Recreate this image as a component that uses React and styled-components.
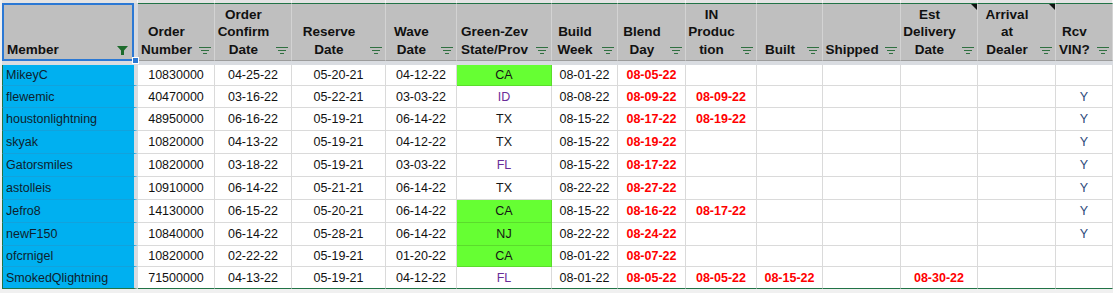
import React from 'react'
import styled, { createGlobalStyle } from 'styled-components'

const GlobalStyle = createGlobalStyle`
  html, body {
    margin: 0;
    padding: 0;
    background: #f0f0f0;
  }
  body {
    font-family: "Liberation Sans", Arial, sans-serif;
  }
`

// member col (incl. 4px freeze bar) + the rest of the sheet
const COLS = '136px 77px 77px 94px 71px 95px 66px 68px 71px 66px 78px 77px 78px 57px'

const Sheet = styled.div`
  width: 1113px;
  height: 293px;
  overflow: hidden;
  padding-left: 2px;
  box-sizing: border-box;
  background: #f0f0f0;
`

const TopCap = styled.div`
  display: grid;
  grid-template-columns: ${COLS};
  height: 3px;
`

const CapCell = styled.div`
  background: #e4e4e4;
  border-right: 1px solid #f7f7f7;
`

const HeaderRow = styled.div`
  display: grid;
  grid-template-columns: ${COLS};
  height: 58px;
`

const MemberHead = styled.div`
  position: relative;
  display: flex;
  background: #bfbfbf;
  border-right: 4px solid #d6d9de;
`

const Selection = styled.div`
  flex: 1;
  display: flex;
  align-items: flex-end;
  justify-content: space-between;
  border: 2px solid #2b78d4;
  padding: 0 4px 1px 3px;
  font-weight: bold;
  font-size: 13.5px;
  line-height: 17.5px;
  color: #111;
`

const Handle = styled.div`
  position: absolute;
  right: -5px;
  bottom: -3px;
  width: 5px;
  height: 5px;
  background: #2b78d4;
  border: 1px solid #fff;
  z-index: 2;
`

const HeadCell = styled.div`
  position: relative;
  display: flex;
  align-items: flex-end;
  background: #bfbfbf;
  border-top: 1px solid #217346;
  border-right: 1px solid #d3d3d3;
  border-bottom: 1px solid #9c9c9c;
  padding-bottom: 2px;
  box-sizing: border-box;

  ${p => p.$comment && `
    &::after {
      content: '';
      position: absolute;
      top: 0;
      right: 0;
      border-left: 6px solid transparent;
      border-top: 6px solid #111;
    }
  `}
`

const HeadText = styled.div`
  flex: 1;
  text-align: center;
  font-weight: bold;
  font-size: 13.5px;
  line-height: 17.5px;
  color: #111;
  white-space: nowrap;
`

const FilterBtn = styled.div`
  flex: none;
  width: 19px;
  display: flex;
  justify-content: flex-end;
  padding-right: 3px;
  margin-bottom: 4px;
  box-sizing: border-box;
`

const FunnelBtn = styled.div`
  display: flex;
  margin-bottom: 3px;
`

const FreezeBar = styled.div`
  height: 4px;
  background: #d9dce1;
`

const Row = styled.div`
  display: grid;
  grid-template-columns: ${COLS};
  height: ${p => p.$h}px;
`

const MemberCell = styled.div`
  display: flex;
  align-items: center;
  background: #00b0f0;
  border-left: 1px solid #217346;
  border-right: 4px solid #d9dce1;
  border-bottom: 1px solid ${p => (p.$last ? '#217346' : '#12a2dc')};
  padding-left: 3px;
  font-size: 12.5px;
  color: #0e1f2e;
  white-space: nowrap;
  overflow: hidden;
`

const Cell = styled.div`
  display: flex;
  align-items: center;
  justify-content: center;
  background: ${p => p.$bg || '#fff'};
  border-right: 1px solid ${p => (p.$bg ? '#5bdc2c' : '#dadada')};
  border-bottom: 1px solid ${p => (p.$last ? '#217346' : p.$bg ? '#5bdc2c' : '#dadada')};
  font-size: 12.5px;
  font-weight: ${p => (p.$bold ? 'bold' : 'normal')};
  color: ${p => p.$color || '#111'};
  white-space: nowrap;
  overflow: hidden;
`

const FilterIcon = () => (
  <svg width="12" height="7" viewBox="0 0 12 7">
    <g stroke="#2f7040" strokeWidth="1">
      <line x1="0" y1="0.5" x2="12" y2="0.5" />
      <line x1="2" y1="3.5" x2="10" y2="3.5" />
      <line x1="4" y1="6.5" x2="8" y2="6.5" />
    </g>
  </svg>
)

const FunnelIcon = () => (
  <svg width="11" height="9" viewBox="0 0 11 9">
    <path d="M0 0 H11 L7 4.5 V9 H4 V4.5 Z" fill="#1d6b2c" />
  </svg>
)

const headers = [
  { lines: ['Order', 'Number'] },
  { lines: ['Order', 'Confirm', 'Date'] },
  { lines: ['Reserve', 'Date'] },
  { lines: ['Wave', 'Date'] },
  { lines: ['Green-Zev', 'State/Prov'] },
  { lines: ['Build', 'Week'] },
  { lines: ['Blend', 'Day'] },
  { lines: ['IN', 'Produc', 'tion'] },
  { lines: ['Built'] },
  { lines: ['Shipped'] },
  { lines: ['Est', 'Delivery', 'Date'], comment: true },
  { lines: ['Arrival', 'at', 'Dealer'], comment: true },
  { lines: ['Rcv', 'VIN?'] },
]

const GREEN = '#66ff33'
const PURPLE = '#6a2c98'
const RED = '#ff0000'

const rows = [
  { h: 21, member: 'MikeyC', num: '10830000', confirm: '04-25-22', reserve: '05-20-21', wave: '04-12-22', state: 'CA', green: true, build: '08-01-22', blend: '08-05-22' },
  { h: 22, member: 'flewemic', num: '40470000', confirm: '03-16-22', reserve: '05-22-21', wave: '03-03-22', state: 'ID', stateColor: PURPLE, build: '08-08-22', blend: '08-09-22', prod: '08-09-22', vin: 'Y' },
  { h: 23, member: 'houstonlightning', num: '48950000', confirm: '06-16-22', reserve: '05-19-21', wave: '06-14-22', state: 'TX', build: '08-15-22', blend: '08-17-22', prod: '08-19-22', vin: 'Y' },
  { h: 23, member: 'skyak', num: '10820000', confirm: '04-13-22', reserve: '05-19-21', wave: '04-12-22', state: 'TX', build: '08-15-22', blend: '08-19-22', vin: 'Y' },
  { h: 23, member: 'Gatorsmiles', num: '10820000', confirm: '03-18-22', reserve: '05-19-21', wave: '03-03-22', state: 'FL', stateColor: PURPLE, build: '08-15-22', blend: '08-17-22', vin: 'Y' },
  { h: 23, member: 'astolleis', num: '10910000', confirm: '06-14-22', reserve: '05-21-21', wave: '06-14-22', state: 'TX', build: '08-22-22', blend: '08-27-22', vin: 'Y' },
  { h: 23, member: 'Jefro8', num: '14130000', confirm: '06-15-22', reserve: '05-20-21', wave: '06-14-22', state: 'CA', green: true, build: '08-15-22', blend: '08-16-22', prod: '08-17-22', vin: 'Y' },
  { h: 23, member: 'newF150', num: '10840000', confirm: '06-14-22', reserve: '05-28-21', wave: '06-14-22', state: 'NJ', green: true, build: '08-22-22', blend: '08-24-22', vin: 'Y' },
  { h: 21, member: 'ofcrnigel', num: '10820000', confirm: '02-22-22', reserve: '05-19-21', wave: '01-20-22', state: 'CA', green: true, build: '08-01-22', blend: '08-07-22' },
  { h: 22, member: 'SmokedQlightning', num: '71500000', confirm: '04-13-22', reserve: '05-19-21', wave: '04-12-22', state: 'FL', stateColor: PURPLE, build: '08-01-22', blend: '08-05-22', prod: '08-05-22', built: '08-15-22', est: '08-30-22' },
]

const App = () => (
  <>
    <GlobalStyle />
    <Sheet>
      <TopCap>
        {Array.from({ length: 14 }).map((_, i) => <CapCell key={i} />)}
      </TopCap>

      <HeaderRow>
        <MemberHead>
          <Selection>
            <span>Member</span>
            <FunnelBtn><FunnelIcon /></FunnelBtn>
          </Selection>
          <Handle />
        </MemberHead>
        {headers.map((h, i) => (
          <HeadCell key={i} $comment={h.comment}>
            <HeadText>
              {h.lines.map((l, j) => (
                <React.Fragment key={j}>
                  {j > 0 && <br />}
                  {l}
                </React.Fragment>
              ))}
            </HeadText>
            <FilterBtn><FilterIcon /></FilterBtn>
          </HeadCell>
        ))}
      </HeaderRow>

      <FreezeBar />

      {rows.map((r, i) => {
        const last = i === rows.length - 1
        return (
          <Row key={r.member} $h={r.h}>
            <MemberCell $last={last}>{r.member}</MemberCell>
            <Cell $last={last}>{r.num}</Cell>
            <Cell $last={last}>{r.confirm}</Cell>
            <Cell $last={last}>{r.reserve}</Cell>
            <Cell $last={last}>{r.wave}</Cell>
            <Cell $last={last} $bg={r.green ? GREEN : null} $color={r.stateColor || '#151515'}>{r.state}</Cell>
            <Cell $last={last}>{r.build}</Cell>
            <Cell $last={last} $bold $color={RED}>{r.blend}</Cell>
            <Cell $last={last} $bold $color={RED}>{r.prod}</Cell>
            <Cell $last={last} $bold $color={RED}>{r.built}</Cell>
            <Cell $last={last}></Cell>
            <Cell $last={last} $bold $color={RED}>{r.est}</Cell>
            <Cell $last={last}></Cell>
            <Cell $last={last} $color="#2c4a7a">{r.vin}</Cell>
          </Row>
        )
      })}
    </Sheet>
  </>
)

export default App
